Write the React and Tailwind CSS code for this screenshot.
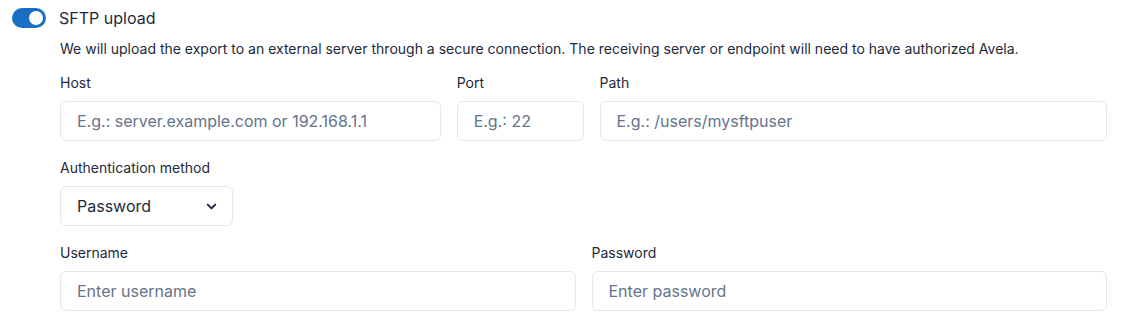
import React from "react";

function Field({ label, placeholder }) {
  return (
    <div className="flex flex-col">
      <label className="text-[14px] leading-[20px] text-[#1e293b] mb-[8px]">{label}</label>
      <input
        placeholder={placeholder}
        className="h-[40px] w-full rounded-[6px] border border-[#e2e8f0] bg-white px-[16px] text-[16px] text-[#1e293b] placeholder:text-[#64748b] outline-none"
      />
    </div>
  );
}

export default function App() {
  return (
    <div
      className="w-[1128px] h-[326px] bg-white pt-[8px] pl-[12px] pr-[21px]"
      style={{ fontFamily: "Inter, 'Noto Sans', sans-serif" }}
    >
      <div className="flex items-center gap-[13px] h-[20px]">
        <div className="relative w-[34px] h-[20px] rounded-full bg-[#1b6ec6] shrink-0">
          <div className="absolute right-[3px] top-[3px] w-[14px] h-[14px] rounded-full bg-white" />
        </div>
        <span className="text-[16px] leading-[20px] text-[#1e293b]">SFTP upload</span>
      </div>
      <div className="pl-[48px]">
        <p className="mt-[11px] text-[14px] leading-[20px] text-[#1e293b]">
          We will upload the export to an external server through a secure connection. The receiving server or endpoint will need to have authorized Avela.
        </p>
        <div className="mt-[14px] grid grid-cols-[3fr_1fr_4fr] gap-x-[16px]">
          <Field label="Host" placeholder="E.g.: server.example.com or 192.168.1.1" />
          <Field label="Port" placeholder="E.g.: 22" />
          <Field label="Path" placeholder="E.g.: /users/mysftpuser" />
        </div>
        <div className="mt-[17px] flex flex-col">
          <label className="text-[14px] leading-[20px] text-[#1e293b] mb-[8px]">Authentication method</label>
          <div className="h-[40px] w-[173px] rounded-[6px] border border-[#e2e8f0] bg-white pl-[16px] pr-[13px] flex items-center justify-between">
            <span className="text-[16px] text-[#1e293b]">Password</span>
            <svg width="15" height="15" viewBox="0 0 24 24" fill="none" stroke="#1e293b" strokeWidth="3.2" strokeLinecap="round" strokeLinejoin="round">
              <path d="M6 9l6 6 6-6" />
            </svg>
          </div>
        </div>
        <div className="mt-[17px] grid grid-cols-2 gap-x-[16px]">
          <Field label="Username" placeholder="Enter username" />
          <Field label="Password" placeholder="Enter password" />
        </div>
      </div>
    </div>
  );
}
